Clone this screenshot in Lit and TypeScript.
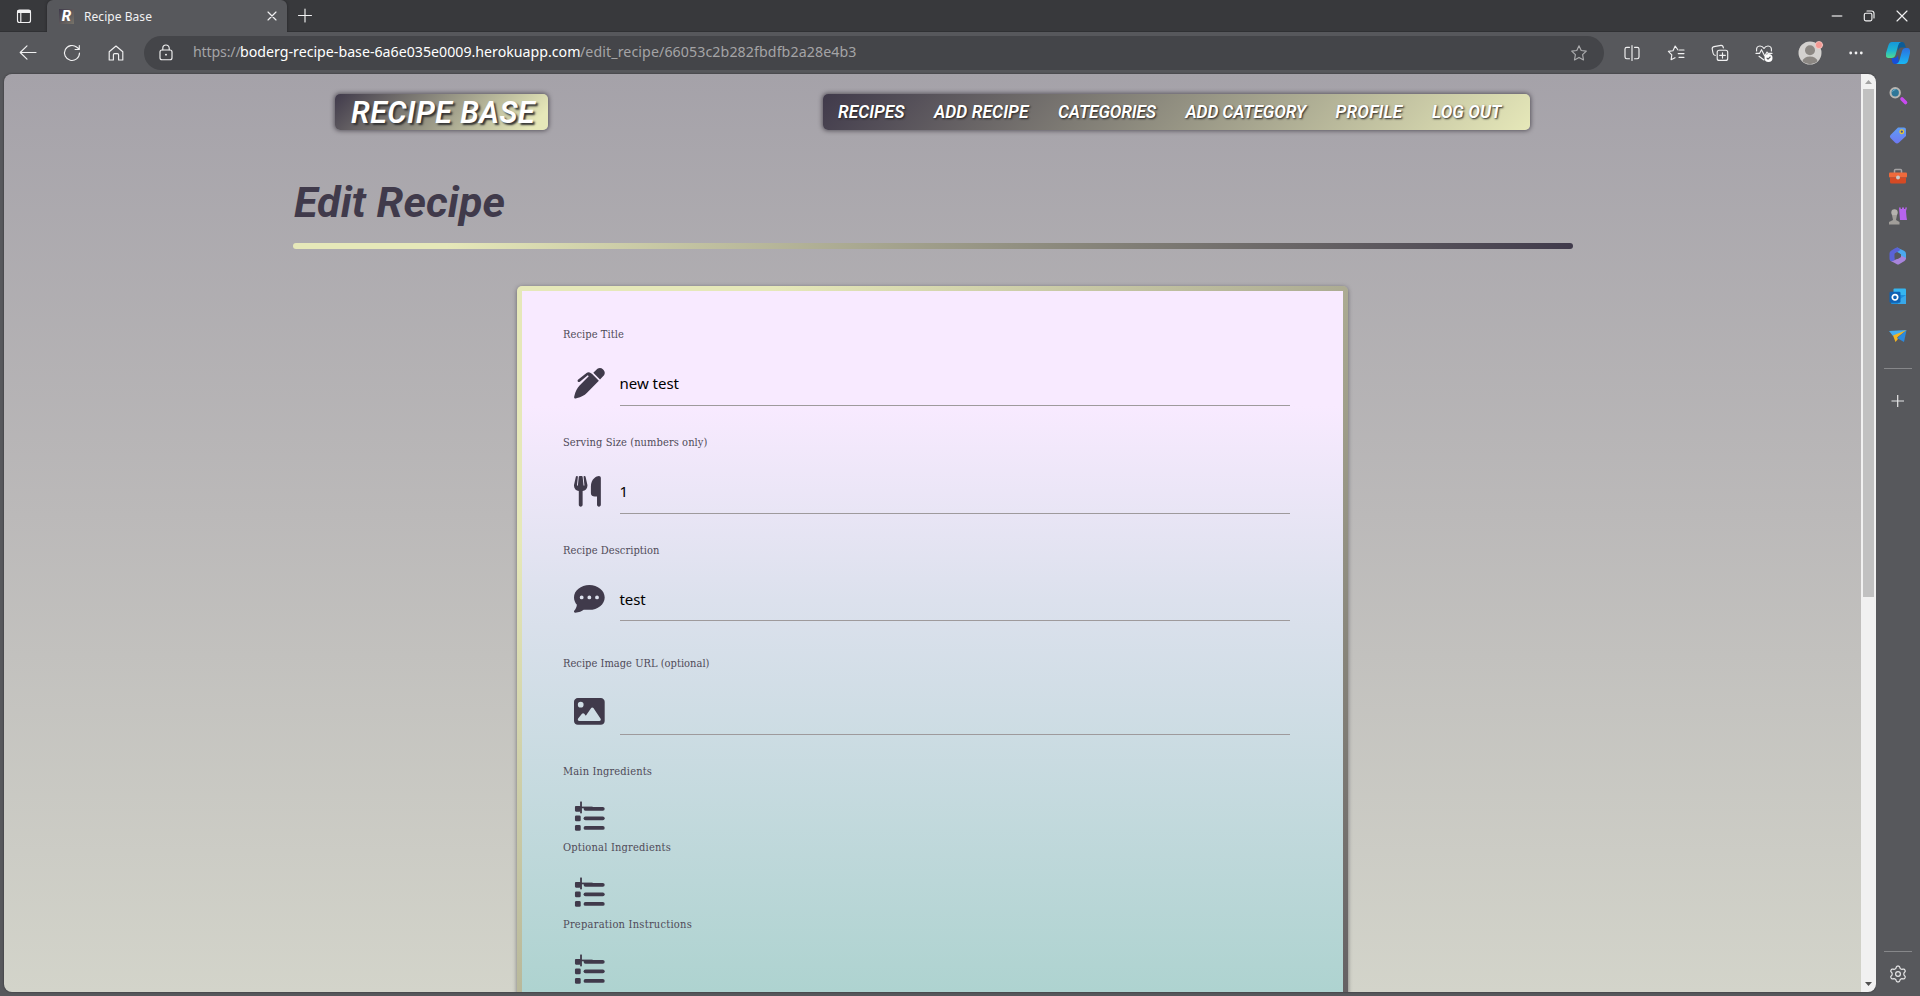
import { LitElement, html, css, svg, nothing } from "lit";
import { customElement, property } from "lit/decorators.js";

/** A line of text that spreads its letters to take an exact width. */
@customElement("fit-text")
class FitText extends LitElement {
  static styles = css`
    :host { display: inline-block; white-space: pre; }
  `;
  @property() text = "";
  @property({ type: Number }) width = 0;
  firstUpdated() {
    const span = this.renderRoot.querySelector("span")!;
    const natural = span.getBoundingClientRect().width;
    const step = (this.width - natural) / this.text.length;
    span.style.letterSpacing = `${step.toFixed(3)}px`;
  }
  render() {
    return html`<span>${this.text}</span>`;
  }
}

const glyphs: Record<string, any> = {
  pen: svg`<path d="M391 13c28-19 66-17 90 8l12 12c24 24 27 62 8 90l-67 70L322 81z"/><path d="M303 99l112 112-202 205c-38 39-97 70-160 86L28 508c-15 4-30-10-26-26l7-29c18-66 45-120 84-160L246 138l-16-15-132 105c-11 9-24 8-32 0s-9-22 0-32L209 82c20-18 51-16 70 1z"/>`,
  utensils: svg`<path d="M64 15C65 6 57 0 48 0S32 6 31 14L1 148c-1 5-1 9-1 14 0 53 38 81 80 89v229c0 18 14 32 32 32s32-14 32-32V251c42-8 80-36 80-89 0-5 0-9-1-14L193 14c-1-8-8-14-17-14s-17 7-16 15l14 139c0 5-3 8-7 8s-8-3-8-8L144 14c-1-8-8-14-16-14h-32c-8 0-15 6-16 14L65 154c0 5-4 8-8 8s-7-3-7-8zM448 32c0-18-14-32-32-32-40 0-134 48-134 176v112c0 36 29 53 64 53h38v139c0 18 14 32 32 32s32-14 32-32z"/>`,
  comment: svg`<path fill-rule="evenodd" d="M256 448c141 0 256-93 256-208S397 32 256 32 0 125 0 240c0 45 18 87 48 121-3 41-22 75-42 96-7 7-8 17-5 26s12 13 21 13c61 0 110-25 139-48 29 0 62 0 95 0zM128 208a32 32 0 1 1 0 64 32 32 0 1 1 0-64zm128 0a32 32 0 1 1 0 64 32 32 0 1 1 0-64zm128 0a32 32 0 1 1 0 64 32 32 0 1 1 0-64z"/>`,
  image: svg`<path fill-rule="evenodd" d="M0 96c0-35 29-64 64-64h384c35 0 64 29 64 64v320c0 35-29 64-64 64H64c-35 0-64-29-64-64zm324 106c-5-6-12-10-20-10s-16 4-20 11l-87 127-26-33c-5-6-12-9-19-9s-15 3-19 9l-64 80c-6 7-7 17-3 26s12 13 22 13h336c9 0 17-5 21-13s4-17-1-25zM112 192a48 48 0 1 0 0-96 48 48 0 1 0 0 96z"/>`,
  list: svg`<rect x="16" y="48" width="96" height="96" rx="18"/><rect x="16" y="208" width="96" height="96" rx="22"/><rect x="16" y="368" width="96" height="96" rx="22"/><rect x="160" y="66" width="352" height="64" rx="32"/><rect x="160" y="224" width="352" height="64" rx="32"/><rect x="160" y="384" width="352" height="64" rx="32"/><rect x="102" y="-24" width="30" height="196"/><rect x="20" y="60" width="290" height="28"/>`,
};

const fields = [
  { label: "Recipe Title", w: 61, icon: "pen", value: "new test", vw: 59.5, cls: "" },
  { label: "Serving Size (numbers only)", w: 144.5, icon: "utensils", value: "1", vw: 8, cls: "" },
  { label: "Recipe Description", w: 96.5, icon: "comment", value: "test", vw: 26, cls: "area" },
  { label: "Recipe Image URL (optional)", w: 146.5, icon: "image", value: "", vw: 0, cls: "photo" },
  { label: "Main Ingredients", w: 89, icon: "list", value: null, vw: 0, cls: "bare" },
  { label: "Optional Ingredients", w: 108, icon: "list", value: null, vw: 0, cls: "bare taller" },
  { label: "Preparation Instructions", w: 129, icon: "list", value: null, vw: 0, cls: "bare" },
];

const nav: [string, number][] = [
  ["RECIPES", 66.5], ["ADD RECIPE", 94.5], ["CATEGORIES", 98], ["ADD CATEGORY", 120.5], ["PROFILE", 67], ["LOG OUT", 69.5],
];

@customElement("recipe-page")
class RecipePage extends LitElement {
  static styles = css`
    :host { display: block; overflow: hidden; background: linear-gradient(180deg, #a5a2a9, #bbb9b9 48%, #d3d4ca); color: #403a4b; }
    .header { display: flex; justify-content: space-between; padding: 20px 331px 0; height: 36px; }
    .bar { height: 36px; border-radius: 5px; box-shadow: 0 0 4px 1px rgba(50, 46, 56, .65); color: #fff; font: italic 600 17.4px/36px Roboto, sans-serif; text-shadow: 1px 1px 2px #222; }
    .brand { box-sizing: border-box; width: 213px; padding-left: 16px; background: linear-gradient(135deg, #403a4b, #e6e8b9 92%); font-size: 30.4px; line-height: 37px; text-shadow: 2px 2px 2px #333; }
    .nav { box-sizing: border-box; width: 707px; display: flex; gap: 29.5px; padding-left: 15px; background: linear-gradient(135deg, #403a4b, #e6e8b9); }
    .title { margin: 0; padding: 42px 0 0 290px; height: 71px; font: italic 700 43px/60px Roboto, sans-serif; }
    .rule { margin: 0 288px 0 289px; height: 6px; border-radius: 3px; background: linear-gradient(90deg, #e6e8b9 12%, #403a4b); }
    .card { width: 821px; margin: 37px 0 0 513px; height: 1180px; padding: 5px; border-radius: 5px; background: linear-gradient(135deg, #e6e8b9 184px, #403a4b 1343px); box-shadow: 0 1px 4px rgba(40, 36, 46, .55); }
    .form { box-sizing: border-box; height: 1180px; padding: 29px 53px 0 41px; background: linear-gradient(180deg, #f8eaff 115px, #dce1ed 309px, #aed3d0 701px); }
    .field { height: 108px; }
    .field.area { height: 113px; }
    .field.area .value { height: 56px; }
    .field.bare { height: 76px; }
    .field.taller { height: 77px; }
    .label { display: block; height: 28px; font: condensed 11px/30px "DejaVu Serif", serif; color: #4f4a58; }
    .row { display: grid; grid-template-columns: 57px 1fr; }
    .icon { width: 30.7px; height: 30.7px; margin: 19.5px 0 0 11px; fill: #403a4b; overflow: visible; }
    .area .icon { margin-top: 19px; }
    .photo .icon { margin-top: 18.5px; }
    .bare .icon { margin-top: 18px; }
    .value { height: 57px; border-bottom: 1px solid #9e9a9c; margin-left: -.5px; font: 15px/70px "Noto Sans", sans-serif; color: #000; }
  `;
  render() {
    return html`
      <header class="header">
        <div class="bar brand"><fit-text text="RECIPE BASE" width="184"></fit-text></div>
        <nav class="bar nav">${nav.map(([t, w]) => html`<fit-text text=${t} width=${w}></fit-text>`)}</nav>
      </header>
      <h1 class="title"><fit-text text="Edit Recipe" width="211"></fit-text></h1>
      <div class="rule"></div>
      <section class="card"><div class="form">
        ${fields.map((f) => html`<div class="field ${f.cls}">
          <label class="label"><fit-text text=${f.label} width=${f.w}></fit-text></label>
          <div class="row">
            <svg class="icon" viewBox="0 0 512 512">${glyphs[f.icon]}</svg>
            ${f.value === null ? nothing : html`<div class="value">${f.value ? html`<fit-text text=${f.value} width=${f.vw}></fit-text>` : nothing}</div>`}
          </div>
        </div>`)}
      </div></section>`;
  }
}

const line = (w: number, body: any, cls = "") => html`<span class="slot ${cls}" style="width:${w}px"><svg class="line" width="24" height="24" viewBox="-12 -12 24 24">${body}</svg></span>`;

const star = "M0-7.2L2.2-2.5L7.3-1.9L3.6 1.7L4.5 6.9L0 4.4L-4.5 6.9L-3.6 1.7L-7.3-1.9L-2.2-2.5Z";

@customElement("browser-chrome")
class BrowserChrome extends LitElement {
  static styles = css`
    :host { display: block; font-family: "Noto Sans", sans-serif; color: #fff; }
    .tabs { display: flex; height: 32px; background: #38393c; box-shadow: inset 0 -1px 0 #303134; }
    .slot { display: flex; flex: none; align-items: center; justify-content: center; }
    .line { fill: none; stroke: #f1f1f2; stroke-width: 1.15; stroke-linecap: round; stroke-linejoin: round; overflow: visible; }
    .tab { box-sizing: border-box; display: flex; align-items: center; width: 240px; height: 32px; margin-left: -1px; padding: 0 0 0 12px; border-radius: 6px 6px 0 0; background: #57585c; box-shadow: 0 0 3px #232326; clip-path: inset(0 -4px 0 -4px); font-size: 12px; }
    .fav { display: flex; align-items: center; justify-content: center; width: 15px; height: 15px; background: linear-gradient(135deg, #403a4b, #777369); font: italic 800 15px/15px Roboto, sans-serif; }
    .name { padding-left: 10px; flex: 1; color: #f1f1f2; }
    .grow { flex: 1; }
    .tools { display: flex; align-items: center; height: 42px; padding-left: 6px; background: #57585c; }
    .pill { display: flex; align-items: center; width: 1460px; height: 34px; margin: 0 5px 0 6px; border-radius: 17px; background: #444549; font-size: 14.2px; line-height: 32px; color: #a4a4a6; }
    .addr { height: 34px; margin-left: -.5px; }
    .host { color: #fff; }
    .lock { margin-right: 7.5px; }
    .dim { opacity: .6; }
    .edge { width: 1px; }
  `;
  render() {
    return html`
      <div class="tabs">
        ${line(48, svg`<rect x="-6.5" y="-6" width="13" height="12.5" rx="2"/><path d="M-6.5-4.5h13" stroke-width="3" stroke-linecap="butt"/><path d="M-3.2-3v9"/>`)}
        <div class="tab">
          <span class="fav">R</span>
          <span class="name"><fit-text text="Recipe Base" width="68"></fit-text></span>
          ${line(31, svg`<path d="M-4-4L4 4M4-4L-4 4"/>`)}
        </div>
        ${line(35, svg`<path d="M-6.5-.5h13M0-7v13"/>`)}
        <span class="grow"></span>
        ${line(32, svg`<path d="M-4.5 0h9" stroke="#a5a5a7" stroke-width="2"/>`)}
        ${line(32, svg`<rect x="-4.7" y="-2.8" width="7.6" height="7.6" rx="1.5"/><path d="M-2-5h4.5Q5-5 5-2.5V2"/>`)}
        ${line(34, svg`<path d="M-5-5L5 5M5-5L-5 5"/>`)}
        <span class="edge"></span>
      </div>
      <div class="tools">
        ${line(44, svg`<path d="M8-.5H-7.500M-1-7.200L-7.800-.5L-1 6.200"/>`)}
        ${line(44, svg`<path d="M7.5 0a7.5 7.5 0 1 1-2.6-5.7L7-4M7.3-7.5v4h-4.2"/>`)}
        ${line(44, svg`<path d="M-6.8-1.2L0-7L6.8-1.2V7H2.6V1.8Q2.6.6 1.4.6H-1.4Q-2.6.6-2.6 1.8V7H-6.8Z"/>`)}
        <div class="pill">
          ${line(42, svg`<rect x="-5" y="-3" width="12" height="9.700" rx="2"/><path d="M-2.200-3.300v-1.500a3.200 3.200 0 0 1 6.400 0v1.500"/><circle cx="1" cy="1.700" r=".9" fill="#fff" stroke="none"/>`, "lock")}
          <fit-text class="addr" text="https://" width="47.5"></fit-text><fit-text class="addr host" text="boderg-recipe-base-6a6e035e0009.herokuapp.com" width="340.5"></fit-text><fit-text class="addr" text="/edit_recipe/66053c2b282fbdfb2a28e4b3" width="276.5"></fit-text>
          <span class="grow"></span>
          ${line(50, svg`<path d=${star}/>`, "dim")}
        </div>
        ${line(45, svg`<path d="M-2.5-5.7H-5.2Q-7-5.7-7-4V4Q-7 5.7-5.2 5.7H-2.5M2.5-5.7H5.2Q7-5.7 7-4V4Q7 5.7 5.2 5.7H2.5M0-7.5V7.5"/>`)}
        ${line(44, svg`<path d="M2-3L-.8-7L-3-2.3L-7.6-1.6L-4.2 1.9L-4.9 6.7L-1 4.7M3.5-3H8M2.2.6H8M3 4.3H8"/>`)}
        ${line(44, svg`<rect x="-2.8" y="-2.8" width="10.5" height="10.2" rx="2"/><path d="M2.5-.3v5.4M-.3 2.4h5.6M-4.8 2.4Q-6.5 2.4-7-0L-7.8-4Q-8-6-6-6.4L1-7.6Q3-7.8 3.4-5.2"/>`)}
        ${line(44, svg`<path d="M-7.4-2Q-8-7-4-7Q-1.5-7 0-4.5Q1.5-7 4-7Q8-7 7.4-2M-8 .4H-4.5L-2.5-3.3L.7 3L3-1L4 .4H8M-5 3.3L0 7"/><circle cx="4.5" cy="5" r="4" fill="#fff" stroke="none"/><path d="M3 5.2L4 6.2L6.2 4" stroke="#57585c"/>`)}
        ${line(48, svg`<g stroke="none"><circle r="11.5" fill="#d3d1cf"/><circle cy="-2.7" r="5" fill="#8b8783"/><path d="M-7.7 8.2Q-6 3.5 0 3.5T7.7 8.2A11.5 11.5 0 0 1-7.7 8.2Z" fill="#8b8783"/><circle cx="9" cy="-8" r="3.6" fill="#f49a94" stroke="#fbd0cc" stroke-width=".7"/></g>`)}
        ${line(44, svg`<g fill="#f1f1f2" stroke="none"><circle cx="-5.3" r="1.4"/><circle r="1.4"/><circle cx="5.3" r="1.4"/></g>`)}
        <span class="slot" style="width:40px"><svg width="24" height="24" viewBox="-12 -12 24 24">
          <defs>
            <linearGradient id="a" x1="0" y1="0" x2="0" y2="1"><stop stop-color="#1597da"/><stop offset=".55" stop-color="#1fb5cf"/><stop offset="1" stop-color="#52dc8e"/></linearGradient>
            <linearGradient id="b" x1="0" y1="0" x2="0" y2="1"><stop stop-color="#2b6fe0"/><stop offset="1" stop-color="#19b8f4"/></linearGradient>
          </defs>
          <path d="M-1-11H4Q6.500-11 7-8L8-5.500H3Q1-5.500 0-2Z" fill="#0b5c98"/>
          <path d="M1 11H-3Q-5.500 11-6 8L-6.500 5H-3Q-.5 4.500 0 2Z" fill="#174ed8"/>
          <path d="M-6-11H3Q.8-10.500 0-7L-2.500 2Q-3.500 5-6.500 5H-10Q-13 4.500-12 0L-9.500-8Q-8.500-11-6-11Z" fill="url(#a)"/>
          <path d="M6 11H-2Q.5 10.500 1.500 7L4-2Q5-5 7.500-5H10Q12.500-4.500 12 0L10 8Q9 11 6 11Z" fill="url(#b)"/>
        </svg></span>
      </div>`;
  }
}

const side = [
  svg`<path d="M4 3L7.500 6.500" stroke="#c84af0" stroke-width="3.600" stroke-linecap="round"/><circle cx="-2.800" cy="-3.200" r="4.700" fill="#2f7798" stroke="#b9b7b3" stroke-width="2"/><path d="M-5.500-4.400A3.200 3.200 0 0 1-2.500-6.400" stroke="#6db4d0" fill="none"/>`,
  svg`<defs><linearGradient id="t" x1="0" y1="0" x2="0" y2="1"><stop stop-color="#5f9df5"/><stop offset="1" stop-color="#6e78f2"/></linearGradient></defs><path d="M0-8.500H6Q8-8.500 8-6.500V0L1 6.500Q-1 8.300-3 6.500L-7.500 2Q-8.800.5-7.500-1Z" fill="url(#t)"/><circle cx="3.800" cy="-4.300" r="1.800" fill="#3d4a9b" stroke="#e6c634" stroke-width="1.300"/>`,
  svg`<path d="M-3.500-3V-5.500Q-3.500-6.500-2.500-6.500H2.500Q3.500-6.500 3.500-5.500V-3" fill="none" stroke="#a5a3a4" stroke-width="1.500"/><rect x="-9" y="-3.500" width="18" height="5" rx="1" fill="#ee6a3c"/><path d="M-8 1.500H8V6Q8 7.500 6.500 7.500H-6.500Q-8 7.500-8 6Z" fill="#d54a24"/><circle cy="1.500" r="2" fill="#c9c9c9"/>`,
  svg`<path d="M1-8.500H2.700V-7H4V-8.500H6V-7H7.300V-8.500H9L8 -5L8.500 1L9 4H2Z" fill="#b764ee"/><circle cx="-3.500" cy="-3.500" r="3.200" fill="#b5b2ae"/><path d="M-6-1H-1L-2 4L1.500 6V8.500H-9V6L-5 4Z" fill="#a19e9a"/>`,
  svg`<path d="M-1-8.500L6-5.200Q8-4.200 8-2V3L3 .5V-1.500L-3-5Z" fill="#4aa9ee"/><path d="M0-8.500Q-1.500-8.700-3-7.800L-7-5.300Q-8.500-4.300-8.500-2.500V2.500Q-8.500 5.500-5.500 5.500L-3.300 4V-2.500L2.500-6Z" fill="#5a63d6"/><path d="M3-.5L8 2Q8 4 6.500 5L1.500 8Q0 9-1.500 8L-7.500 4.700Q-5 5.500-3.300 4L-1 2.900L3 .8Z" fill="#a884dc"/><path d="M-3.300-2L-.3-3.700L3-1.500V1L-.3 3L-3.300 1.700Z" fill="#57585c"/>`,
  svg`<rect x="-4.500" y="-7.500" width="12.500" height="9" rx="1" fill="#35b5f0"/><path d="M-7-1H8V6Q8 8-6.500 8Q-7 8-7 6Z" fill="#1d8fdc"/><path d="M8-1V8H0L2 3Z" fill="#38a8ea"/><rect x="-8.500" y="-4.200" width="11" height="11" rx="1.200" fill="#0f62b4"/><circle cx="-3" cy="1.300" r="2.700" fill="none" stroke="#fff" stroke-width="1.700"/>`,
  svg`<path d="M-9-5L8.500-6L2-1.500L-5 0Z" fill="#45aef0"/><path d="M8.500-6L-1 2L6 6Z" fill="#2c8ade"/><path d="M8.500-6L-5-.5L-2.500 6L0 3L-1 1.500Z" fill="#f2b422"/>`,
];

@customElement("side-bar")
class SideBar extends LitElement {
  static styles = css`
    :host { display: flex; flex-direction: column; align-items: center; background: #57585c; }
    .item { display: flex; align-items: center; justify-content: center; height: 40px; width: 44px; }
    .add { height: 63px; }
    .settings { height: 44px; }
    svg { overflow: visible; }
    .sep { width: 28px; height: 1px; background: #86878a; }
    .gap { flex: 1; }
    .apps { padding-top: 2px; height: 292px; }
    .line { fill: none; stroke: #e6e6e7; stroke-width: 1.2; stroke-linejoin: round; }
  `;
  render() {
    const gear: string[] = [];
    for (let i = 0; i < 72; i++) {
      const a = (i / 72) * Math.PI * 2;
      const r = 6.9 + 1.1 * Math.tanh(1.8 * Math.cos(a * 6));
      gear.push(`${(r * Math.sin(a)).toFixed(2)},${(r * Math.cos(a)).toFixed(2)}`);
    }
    return html`
      <div class="apps">${side.map((s) => html`<div class="item"><svg width="20" height="20" viewBox="-10 -10 20 20">${s}</svg></div>`)}</div>
      <div class="sep"></div>
      <div class="item add"><svg class="line" width="20" height="20" viewBox="-10 -10 20 20"><path d="M-6.500 0H6M-.3-6V6"/></svg></div>
      <div class="gap"></div>
      <div class="sep"></div>
      <div class="item settings"><svg class="line" width="20" height="20" viewBox="-10 -10 20 20"><polygon points=${gear.join(" ")}/><circle r="2.400"/></svg></div>`;
  }
}

@customElement("app-root")
class AppRoot extends LitElement {
  static styles = css`
    :host { display: flex; flex-direction: column; width: 1920px; height: 996px; overflow: hidden; background: #57585c; }
    .body { display: flex; height: 922px; }
    .frame { display: flex; width: 1872px; height: 918px; margin-left: 4px; border-radius: 8px; overflow: hidden; box-shadow: 0 0 2px #2b2b2e; }
    .page { width: 1857px; height: 918px; }
    .scroll { display: flex; flex-direction: column; align-items: center; width: 15px; background: #f1f1f1; }
    .thumb { width: 11px; height: 508px; background: #c1c1c1; }
    .arrow { height: 15px; width: 15px; }
    .down { margin-top: auto; }
    .side { width: 44px; height: 922px; }
  `;
  render() {
    return html`
      <browser-chrome></browser-chrome>
      <div class="body">
        <div class="frame">
          <recipe-page class="page"></recipe-page>
          <div class="scroll">
            <svg class="arrow" viewBox="0 0 15 15"><path d="M4 10L7.500 6L11 10Z" fill="#a3a3a3"/></svg>
            <div class="thumb"></div>
            <svg class="arrow down" viewBox="0 0 15 15"><path d="M4 5L7.500 9L11 5Z" fill="#505050"/></svg>
          </div>
        </div>
        <side-bar class="side"></side-bar>
      </div>`;
  }
}
